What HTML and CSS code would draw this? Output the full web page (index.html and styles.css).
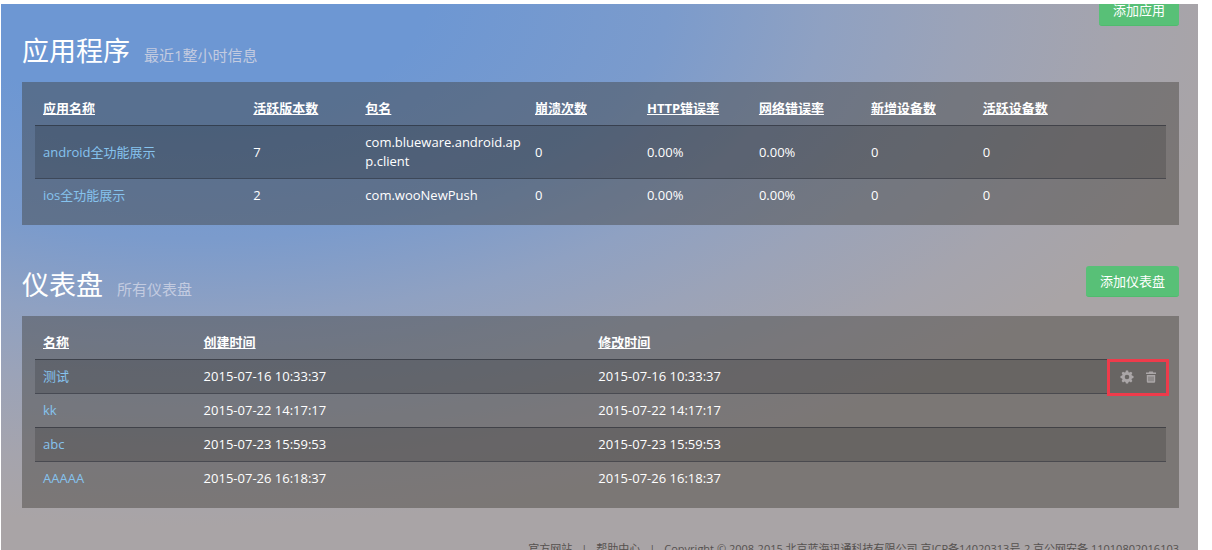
FILE: index.html
```html
<!DOCTYPE html>
<html lang="zh-CN">
<head>
<meta charset="utf-8">
<title>应用程序</title>
<link rel="stylesheet" href="styles.css">
</head>
<body>
<div class="page">
  <div class="toolbar"><button class="btn" type="button">添加应用</button></div>
  <main>
    <section class="section">
      <header class="section-head">
        <h2 class="title">应用程序 <small class="subtitle">最近1整小时信息</small></h2>
      </header>
      <div class="panel">
        <table class="grid">
          <colgroup><col class="c-app"><col class="c-num"><col class="c-pkg"><col class="c-num"><col class="c-num"><col class="c-num"><col class="c-num"><col></colgroup>
          <thead>
            <tr><th>应用名称</th><th>活跃版本数</th><th>包名</th><th>崩溃次数</th><th>HTTP错误率</th><th>网络错误率</th><th>新增设备数</th><th>活跃设备数</th></tr>
          </thead>
          <tbody>
            <tr><td><a href="#">android全功能展示</a></td><td>7</td><td>com.blueware.android.app.client</td><td>0</td><td>0.00%</td><td>0.00%</td><td>0</td><td>0</td></tr>
            <tr><td><a href="#">ios全功能展示</a></td><td>2</td><td>com.wooNewPush</td><td>0</td><td>0.00%</td><td>0.00%</td><td>0</td><td>0</td></tr>
          </tbody>
        </table>
      </div>
    </section>
    <section class="section">
      <header class="section-head">
        <h2 class="title">仪表盘 <small class="subtitle">所有仪表盘</small></h2>
        <button class="btn" type="button">添加仪表盘</button>
      </header>
      <div class="panel">
        <table class="grid">
          <colgroup><col class="c-name"><col class="c-time"><col class="c-time"><col></colgroup>
          <thead>
            <tr><th>名称</th><th>创建时间</th><th>修改时间</th><td></td></tr>
          </thead>
          <tbody>
            <tr><td><a href="#">测试</a></td><td>2015-07-16 10:33:37</td><td>2015-07-16 10:33:37</td>
              <td class="actions-cell"><div class="actions">
                <button class="icon-btn" type="button" aria-label="设置"><svg width="14" height="14" viewBox="0 0 14 14"><path fill="currentColor" fill-rule="evenodd" d="M5.900 0.500h2.200l.4 1.700 1 .4 1.500-.9 1.400 1.400-.9 1.500.4 1 1.600.4v2.100l-1.600.4-.4 1 .9 1.500-1.400 1.400-1.500-.9-1 .4-.4 1.600H5.900l-.4-1.600-1-.4-1.500.9L1.600 11l.9-1.500-.4-1-1.600-.4V6l1.600-.4.4-1-.9-1.500L3 1.700l1.500.9 1-.4zM7 4.700a2.300 2.300 0 1 0 0 4.600 2.300 2.300 0 0 0 0-4.600z"/></svg></button>
                <button class="icon-btn" type="button" aria-label="删除"><svg width="14" height="14" viewBox="0 0 14 14"><path fill="currentColor" fill-rule="evenodd" d="M5.200 1.500h3.600l.5 1H12V4H2V2.500h2.700zM2.800 5h8.400v6.500a1.200 1.200 0 0 1-1.200 1.200H4a1.200 1.200 0 0 1-1.200-1.200zM4.600 6.400v4.800h.8V6.400zM6.600 6.400v4.800h.8V6.400zM8.600 6.400v4.800h.8V6.400z"/></svg></button>
              </div></td></tr>
            <tr><td><a href="#">kk</a></td><td>2015-07-22 14:17:17</td><td>2015-07-22 14:17:17</td><td></td></tr>
            <tr><td><a href="#">abc</a></td><td>2015-07-23 15:59:53</td><td>2015-07-23 15:59:53</td><td></td></tr>
            <tr><td><a href="#">AAAAA</a></td><td>2015-07-26 16:18:37</td><td>2015-07-26 16:18:37</td><td></td></tr>
          </tbody>
        </table>
      </div>
    </section>
  </main>
  <footer class="footer">
    <a href="#">官方网站</a><span class="sep">|</span><a href="#">帮助中心</a><span class="sep">|</span><span>Copyright © 2008-2015 北京蓝海讯通科技有限公司 京ICP备14020313号-2 京公网安备 11010802016103</span>
  </footer>
</div>
</body>
</html>
```
FILE: styles.css
```css
* { box-sizing: border-box; }

body {
  margin: 0;
  padding: 4px 14px 0 1px;
  height: 100vh;
  overflow: hidden;
  background: #fff;
  color: #fff;
  font: 13px/19px "Open Sans", "Noto Sans CJK SC", sans-serif;
}

.page {
  overflow: hidden;
  padding: 0 19px 0 21px;
  background: radial-gradient(88% 94% at 16% 0, #6d97d3 0%, #6d97d3 22%, #7b9bcc 45%, #8fa1c2 60%, #9ba3b8 73%, #a5a4ad 88%, #a9a4a6 100%);
}

.toolbar {
  display: flex;
  justify-content: flex-end;
  margin: -9px 0 5px;
}

.btn {
  height: 31px;
  padding: 0 14px;
  border: 0;
  border-bottom: 1px solid #50bb6e;
  border-radius: 3px;
  background: #58c077;
  color: #fff;
  font: inherit;
  cursor: pointer;
}

.section { margin-bottom: 40px; }
.section:last-child { margin-bottom: 31px; }

.section-head {
  display: flex;
  justify-content: space-between;
  align-items: flex-start;
  margin-bottom: 11px;
}

.section-head .btn { margin-top: 1px; }

.title {
  display: flex;
  align-items: baseline;
  gap: 14px;
  margin: 0;
  font-size: 27px;
  font-weight: 400;
  line-height: 40px;
}

.subtitle {
  color: #c3cbe0;
  font-size: 15px;
  line-height: 20px;
}

.panel {
  padding: 10px 13px 13px;
  background: rgba(58, 56, 48, 0.41);
}

.grid {
  width: 100%;
  table-layout: fixed;
  border-spacing: 0;
}

.c-app { width: 18.6%; }
.c-num { width: 9.9%; }
.c-pkg { width: 15%; }
.c-name { width: 14.2%; }
.c-time { width: 34.9%; }

.grid th,
.grid td {
  padding: 7px 0 7px 8px;
  text-align: left;
  vertical-align: middle;
  overflow-wrap: anywhere;
}

.grid th {
  font-weight: 700;
  text-decoration: underline;
}

.grid tbody td { border-top: 1px solid rgba(35, 38, 48, 0.55); }
.grid tbody tr:nth-child(odd) { background: rgba(0, 0, 0, 0.15); }

.grid a {
  color: #86c3ee;
  text-decoration: none;
}

.grid .actions-cell { padding-right: 8px; }

.actions {
  position: relative;
  display: flex;
  justify-content: flex-end;
  gap: 10px;
  width: max-content;
  margin-left: auto;
}

/* highlight frame around the row actions */
.actions::after {
  content: "";
  position: absolute;
  inset: -8px -11px -10px -13px;
  border: 3px solid #ee3b4b;
  pointer-events: none;
}

.icon-btn {
  display: flex;
  align-items: center;
  height: 19px;
  padding: 0;
  border: 0;
  background: none;
  color: #aaa6a7;
  cursor: pointer;
}

.footer {
  display: flex;
  justify-content: flex-end;
  color: #55514f;
  font-size: 11px;
  line-height: 20px;
  white-space: nowrap;
}

.footer a {
  color: inherit;
  text-decoration: none;
}

.sep { margin: 0 9px; }
```
